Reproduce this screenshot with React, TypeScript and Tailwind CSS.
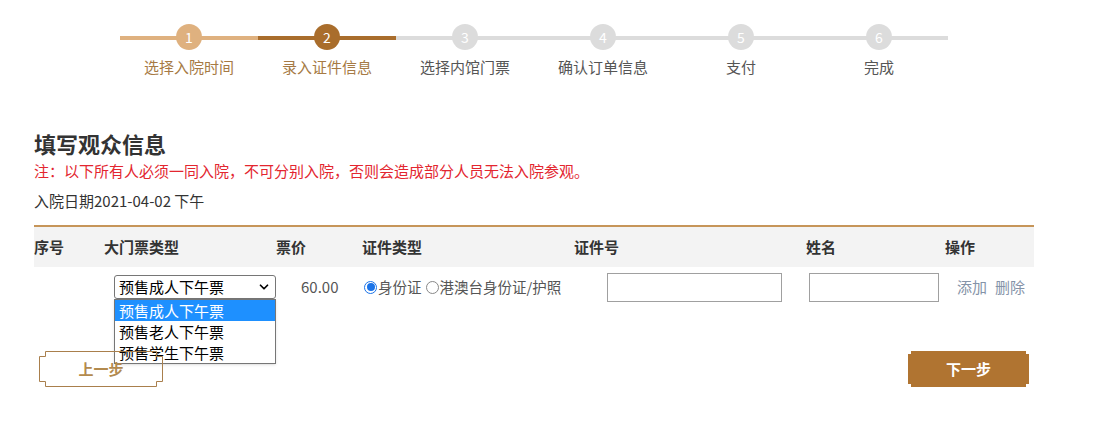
import { ChevronDown } from 'lucide-react';

const steps = ['选择入院时间', '录入证件信息', '选择内馆门票', '确认订单信息', '支付', '完成'];

function Stepper() {
  return (
    <div className="flex pl-[120px] pt-[24px]">
      {steps.map((label, i) => {
        const line = i === 0 ? 'bg-[#dfb17f]' : i === 1 ? 'bg-[#a96d2c]' : 'bg-[#dcdcdc]';
        const dot = i === 0 ? 'bg-[#dfb17f]' : i === 1 ? 'bg-[#a96d2c]' : 'bg-[#dcdcdc]';
        const text = i < 2 ? 'text-[#a67a44]' : 'text-[#555]';
        return (
          <div key={label} className="w-[138px] flex flex-col items-center">
            <div className="relative w-full h-[26px] flex items-center justify-center">
              <div className={`absolute left-0 right-0 top-[12px] h-[4px] ${line}`} />
              <div className={`relative w-[26px] h-[26px] rounded-full ${dot} text-white text-[14px] leading-[26px] text-center`}>
                {i + 1}
              </div>
            </div>
            <div className={`mt-[7px] text-[15px] leading-[20px] ${text}`}>{label}</div>
          </div>
        );
      })}
    </div>
  );
}

function PrevButton() {
  return (
    <button className="relative w-[124px] h-[36px] text-[15px] font-bold text-[#b38a4e]">
      <svg className="absolute inset-0" width="124" height="36" viewBox="0 0 124 36">
        <path
          d="M6.5,0.5 H117.5 V5.5 H123.5 V30.5 H117.5 V35.5 H6.5 V30.5 H0.5 V5.5 H6.5 Z"
          fill="none"
          stroke="#a97f4c"
          strokeWidth="1"
        />
      </svg>
      <span className="relative">上一步</span>
    </button>
  );
}

function NextButton() {
  return (
    <button className="relative w-[121px] h-[36px] text-[15px] font-bold text-white">
      <svg className="absolute inset-0" width="121" height="36" viewBox="0 0 121 36">
        <path d="M3,0 H118 V3 H121 V33 H118 V36 H3 V33 H0 V3 H3 Z" fill="#b07431" />
      </svg>
      <span className="relative">下一步</span>
    </button>
  );
}

export default function App() {
  return (
    <div
      className="w-[1106px] h-[421px] bg-white text-[#333] overflow-hidden"
      style={{ fontFamily: '"Noto Sans CJK SC", "Liberation Sans", sans-serif' }}
    >
      <Stepper />

      <div className="pl-[34px] pr-[72px] pt-[53px]">
        <h2 className="text-[22px] leading-[26px] font-bold text-[#333]">填写观众信息</h2>
        <p className="mt-[6px] text-[15px] leading-[18px] text-[#e3262f]">
          注：以下所有人必须一同入院，不可分别入院，否则会造成部分人员无法入院参观。
        </p>
        <p className="mt-[12px] text-[15px] leading-[18px] text-[#333]">入院日期2021-04-02 下午</p>

        {/* table */}
        <div className="mt-[15px] w-[1000px] border-t-2 border-[#c69559]">
          <div className="flex h-[40px] items-center bg-[#f3f3f3] text-[15px] font-bold text-[#333]">
            <div className="w-[70px]">序号</div>
            <div className="w-[172px]">大门票类型</div>
            <div className="w-[86px]">票价</div>
            <div className="w-[212px]">证件类型</div>
            <div className="w-[232px]">证件号</div>
            <div className="w-[139px]">姓名</div>
            <div className="flex-1">操作</div>
          </div>
          <div className="flex h-[40px] items-center text-[15px]">
            <div className="w-[70px]" />
            <div className="w-[172px] pl-[10px] relative">
              <div className="w-[162px] h-[24px] border border-[#767676] rounded-[3px] flex items-center justify-between pl-[4px] pr-[4px] text-[15px] text-black">
                <span>预售成人下午票</span>
                <ChevronDown className="w-[14px] h-[14px]" strokeWidth={3} />
              </div>
              <div className="absolute left-[10px] top-[24px] w-[162px] border border-[#767676] bg-white text-[15px] leading-[21px] text-black shadow-sm">
                <div className="bg-[#1e90ff] text-white pl-[4px]">预售成人下午票</div>
                <div className="pl-[4px]">预售老人下午票</div>
                <div className="pl-[4px]">预售学生下午票</div>
              </div>
            </div>
            <div className="w-[86px] pl-[25px] text-[#555]">60.00</div>
            <div className="w-[212px] pl-[2px] flex items-center text-[#555] text-[14.5px]">
              <span className="w-[13px] h-[13px] rounded-full border border-[#1a73e8] flex items-center justify-center mr-[1px]">
                <span className="w-[8px] h-[8px] rounded-full bg-[#1a73e8]" />
              </span>
              <span>身份证</span>
              <span className="w-[13px] h-[13px] rounded-full border border-[#888] ml-[4px] mr-[1px]" />
              <span>港澳台身份证/护照</span>
            </div>
            <div className="w-[232px] pl-[33px]">
              <div className="w-[175px] h-[29px] border border-[#a0a0a0]" />
            </div>
            <div className="w-[139px] pl-[3px]">
              <div className="w-[130px] h-[29px] border border-[#a0a0a0]" />
            </div>
            <div className="flex-1 pl-[12px] text-[#8593a8] flex gap-[8px]">
              <span>添加</span>
              <span>删除</span>
            </div>
          </div>
        </div>

        <div className="mt-[44px] w-[995px] flex justify-between pl-[5px]">
          <PrevButton />
          <NextButton />
        </div>
      </div>
    </div>
  );
}
